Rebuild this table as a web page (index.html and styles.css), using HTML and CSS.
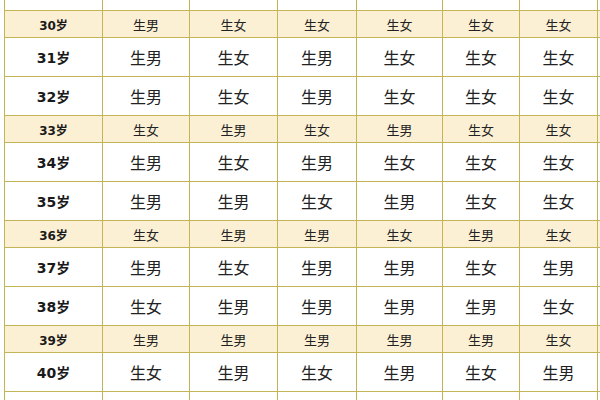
FILE: index.html
```html
<!DOCTYPE html>
<html lang="zh-CN">
<head>
<meta charset="utf-8">
<title>生男生女表</title>
<link rel="stylesheet" href="styles.css">
</head>
<body>
<div class="chart">
  <div class="row big"><div class="age">29岁</div><div>生女</div><div>生男</div><div>生女</div><div>生男</div><div>生女</div><div>生女</div></div>
  <div class="row small"><div class="age">30岁</div><div>生男</div><div>生女</div><div>生女</div><div>生女</div><div>生女</div><div>生女</div></div>
  <div class="row big"><div class="age">31岁</div><div>生男</div><div>生女</div><div>生男</div><div>生女</div><div>生女</div><div>生女</div></div>
  <div class="row big"><div class="age">32岁</div><div>生男</div><div>生女</div><div>生男</div><div>生女</div><div>生女</div><div>生女</div></div>
  <div class="row small"><div class="age">33岁</div><div>生女</div><div>生男</div><div>生女</div><div>生男</div><div>生女</div><div>生女</div></div>
  <div class="row big"><div class="age">34岁</div><div>生男</div><div>生女</div><div>生男</div><div>生女</div><div>生女</div><div>生女</div></div>
  <div class="row big"><div class="age">35岁</div><div>生男</div><div>生男</div><div>生女</div><div>生男</div><div>生女</div><div>生女</div></div>
  <div class="row small"><div class="age">36岁</div><div>生女</div><div>生男</div><div>生男</div><div>生女</div><div>生男</div><div>生女</div></div>
  <div class="row big"><div class="age">37岁</div><div>生男</div><div>生女</div><div>生男</div><div>生男</div><div>生女</div><div>生男</div></div>
  <div class="row big"><div class="age">38岁</div><div>生女</div><div>生男</div><div>生男</div><div>生男</div><div>生男</div><div>生女</div></div>
  <div class="row small"><div class="age">39岁</div><div>生男</div><div>生男</div><div>生男</div><div>生男</div><div>生男</div><div>生女</div></div>
  <div class="row big"><div class="age">40岁</div><div>生女</div><div>生男</div><div>生女</div><div>生男</div><div>生女</div><div>生男</div></div>
  <div class="row big"><div class="age">41岁</div><div>生男</div><div>生女</div><div>生男</div><div>生女</div><div>生男</div><div>生女</div></div>
</div>
</body>
</html>
```

FILE: styles.css
```css
html, body {
  margin: 0;
  padding: 0;
  background: #ffffff;
  overflow: hidden;
}
.chart {
  margin: -28px 0 0 4px;
  width: 595px;
  border-left: 1px solid #c4b458;
  font-family: "Noto Sans CJK SC", "DejaVu Sans", sans-serif;
  color: #222222;
}
.row {
  display: grid;
  grid-template-columns: 98px 87px 88px 79px 86px 77px 78px;
  box-sizing: border-box;
  border-bottom: 1px solid #c4b458;
}
.row > div {
  box-sizing: border-box;
  border-right: 1px solid #c4b458;
  display: flex;
  align-items: center;
  justify-content: center;
  white-space: nowrap;
}
.row.big {
  height: 39px;
  font-size: 16px;
}
.row.small {
  height: 27px;
  font-size: 13px;
  background: #fbefd4;
}
.row .age {
  font-family: "DejaVu Sans", "Noto Sans CJK SC", sans-serif;
  font-weight: bold;
  font-size: 14px;
  color: #1a1a1a;
}
.row.small .age {
  font-size: 12px;
}
```
